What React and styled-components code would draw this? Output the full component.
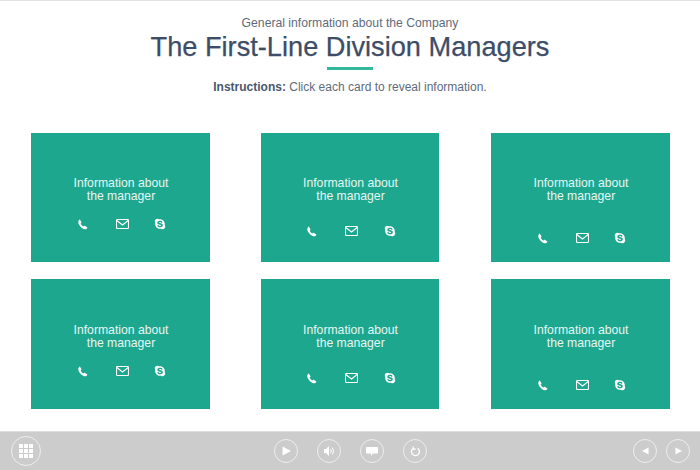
import React from 'react';
import styled, { createGlobalStyle } from 'styled-components';
import { FaSkype } from 'react-icons/fa';

const Global = createGlobalStyle`
  html, body {
    margin: 0;
    padding: 0;
    background: #ffffff;
  }
  body {
    font-family: 'Liberation Sans', Arial, sans-serif;
  }
`;

const Page = styled.div`
  width: 700px;
  height: 470px;
  display: flex;
  flex-direction: column;
  overflow: hidden;
  border-top: 1px solid #dfe3e3;
  box-sizing: border-box;
`;

const Header = styled.header`
  height: 132px;
  display: flex;
  flex-direction: column;
  align-items: center;
  flex: none;
`;

const Kicker = styled.p`
  margin: 14px 0 0;
  font-size: 12.2px;
  line-height: 16px;
  color: #5f6b7c;
`;

const Title = styled.h1`
  margin: 0;
  font-size: 27.2px;
  line-height: 31px;
  font-weight: 400;
  color: #3d4d67;
  -webkit-text-stroke: 0.25px #3d4d67;
`;

const Rule = styled.div`
  width: 46px;
  height: 3px;
  margin-top: 5px;
  background: #34b89d;
`;

const Instructions = styled.p`
  margin: 9px 0 0;
  font-size: 12px;
  line-height: 16px;
  color: #5f6b7c;
  strong {
    color: #4a586e;
  }
`;

const Grid = styled.main`
  flex: 1;
  display: grid;
  grid-template-columns: repeat(3, 179px);
  grid-template-rows: 129px 130px;
  justify-content: space-between;
  row-gap: 17px;
  padding: 0 30px 0 31px;
`;

const Card = styled.section`
  background: #1ea78f;
  color: #ffffff;
  display: flex;
  flex-direction: column;
  align-items: center;
  padding: 44px 0 0 1px;
  box-sizing: border-box;
  &:nth-child(3n+2) {
    width: 178px;
  }
  &:nth-child(n+4) {
    padding-top: 45px;
  }
`;

const CardText = styled.p`
  margin: 0;
  font-size: 12.2px;
  line-height: 13px;
  text-align: center;
  color: #e6f5f1;
`;

const Contacts = styled.div`
  margin-top: ${p => p.$offset}px;
  display: grid;
  grid-template-columns: 40px 38px 13px;
  align-items: center;
`;

const ContactIcon = styled.span`
  width: 13px;
  height: 12px;
  display: flex;
  align-items: center;
  justify-content: center;
  color: #ffffff;
`;

const Toolbar = styled.footer`
  height: 39px;
  flex: none;
  background: #cccccc;
  border-top: 1px solid #dddddd;
  box-sizing: border-box;
  display: grid;
  grid-template-columns: 1fr auto 1fr;
  align-items: center;
  padding: 0 10px 0 11px;
`;

const Group = styled.div`
  display: flex;
  align-items: center;
  gap: ${p => p.$gap || 0}px;
  justify-content: ${p => p.$end ? 'flex-end' : 'flex-start'};
`;

const RoundButton = styled.button`
  width: ${p => p.$size}px;
  height: ${p => p.$size}px;
  border-radius: 50%;
  border: 1.5px solid #eeeeee;
  background: transparent;
  padding: 0;
  display: flex;
  align-items: center;
  justify-content: center;
  color: #ffffff;
  box-sizing: border-box;
`;

const Phone = () => (
  <svg width="11" height="11" viewBox="0 0 24 24" fill="currentColor">
    <path d="M6.6 1.5 9.6 7c.3.6.2 1.2-.3 1.7L8 10c.9 2.4 3.3 5.3 5.7 6.4l1.4-1.3c.5-.4 1.1-.5 1.7-.2l5.2 3c.6.3.7 1 .4 1.5-1.2 2.2-3.3 3.6-5.6 3.1C9.800 20.900 3.400 13 2.800 7.500 2.500 5 3.600 3 5.300 1.400c.4-.4 1-.3 1.300.100z" />
  </svg>
);

const Mail = () => (
  <svg width="13" height="10" viewBox="0 0 13 10" fill="none" stroke="currentColor" strokeWidth="1.100">
    <rect x="0.5" y="0.5" width="12" height="9" rx="1" />
    <path d="M0.800 1.500 6.500 6 12.200 1.500" />
  </svg>
);

const Contact = ({ offset }) => (
  <Contacts $offset={offset}>
    <ContactIcon><Phone /></ContactIcon>
    <ContactIcon><Mail /></ContactIcon>
    <ContactIcon><FaSkype size={12} /></ContactIcon>
  </Contacts>
);

const offsets = [15, 22, 29, 15, 22, 29];

const Dots = () => (
  <svg width="14" height="14" viewBox="0 0 14 14" fill="currentColor">
    {[0, 1, 2].flatMap(r => [0, 1, 2].map(c => (
      <rect key={`${r}-${c}`} x={c * 5} y={r * 5} width="4" height="4" />
    )))}
  </svg>
);

const Play = ({ w = 9, h = 10 }) => (
  <svg width={w} height={h} viewBox="0 0 8 8" fill="currentColor"><path d="M0.500 0 8 4 0.500 8z" /></svg>
);

const Back = () => (
  <svg width="7" height="8" viewBox="0 0 8 8" fill="currentColor"><path d="M7.500 0 0 4 7.500 8z" /></svg>
);

const Volume = () => (
  <svg width="11" height="10" viewBox="0 0 11 10" fill="none" stroke="currentColor">
    <path d="M0 3h2l3-3v10L2 7H0z" fill="currentColor" stroke="none" />
    <path d="M6.500 3a3 3 0 0 1 0 4M8 1.500a5 5 0 0 1 0 7" strokeWidth="1" />
  </svg>
);

const Caption = () => (
  <svg width="12" height="9" viewBox="0 0 12 9" fill="currentColor">
    <path d="M1 0h10a1 1 0 0 1 1 1v4.500a1 1 0 0 1-1 1H7L5 9V6.500H1a1 1 0 0 1-1-1V1a1 1 0 0 1 1-1z" />
  </svg>
);

const Replay = () => (
  <svg width="11" height="11" viewBox="0 0 11 11" fill="none" stroke="currentColor" strokeWidth="1.300">
    <path d="M7.500 2.200A4 4 0 1 1 3 2.400" />
    <path d="M3.200 0.500v2.600h2.600" strokeWidth="1.100" />
  </svg>
);

export default function App() {
  return (
    <Page>
      <Global />
      <Header>
        <Kicker>General information about the Company</Kicker>
        <Title>The First-Line Division Managers</Title>
        <Rule />
        <Instructions><strong>Instructions:</strong> Click each card to reveal information.</Instructions>
      </Header>
      <Grid>
        {offsets.map((offset, i) => (
          <Card key={i}>
            <CardText>Information about<br />the manager</CardText>
            <Contact offset={offset} />
          </Card>
        ))}
      </Grid>
      <Toolbar>
        <Group><RoundButton $size={30}><Dots /></RoundButton></Group>
        <Group $gap={19}>
          <RoundButton $size={24}><Play /></RoundButton>
          <RoundButton $size={24}><Volume /></RoundButton>
          <RoundButton $size={24}><Caption /></RoundButton>
          <RoundButton $size={24}><Replay /></RoundButton>
        </Group>
        <Group $end $gap={9}>
          <RoundButton $size={24}><Back /></RoundButton>
          <RoundButton $size={24}><Play w={7} h={8} /></RoundButton>
        </Group>
      </Toolbar>
    </Page>
  );
}
